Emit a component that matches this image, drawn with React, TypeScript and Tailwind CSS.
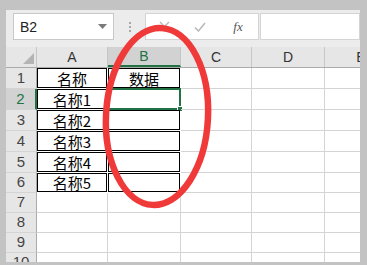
import React from 'react';

const cols = [
  { label: 'A', w: 71 },
  { label: 'B', w: 73 },
  { label: 'C', w: 71 },
  { label: 'D', w: 73 },
  { label: 'E', w: 73 },
];

const rowHeights = [21, 21, 21, 21, 21, 20, 20, 20, 20, 20];

const data: Record<number, string[]> = {
  1: ['名称', '数据'],
  2: ['名称1', ''],
  3: ['名称2', ''],
  4: ['名称3', ''],
  5: ['名称4', ''],
  6: ['名称5', ''],
};

const font = { fontFamily: '"Noto Sans CJK SC", "Liberation Sans", sans-serif' };

export default function App() {
  return (
    <div className="w-[367px] h-[265px] bg-[#c3c3c3] pt-[10px] pl-[6px] pr-[7px] pb-[3px]">
      <div className="relative w-full h-full bg-[#ececec] overflow-hidden flex flex-col" style={font}>
        {/* formula bar */}
        <div className="h-[37px] shrink-0 flex items-start pt-[3px] pl-[7px]">
          <div className="w-[101px] h-[27px] bg-white border border-[#c8c8c8] flex items-center justify-between pl-[6px] pr-[6px]">
            <span className="text-[14px] text-[#222] leading-none" style={{ fontFamily: '"Liberation Sans", sans-serif' }}>B2</span>
            <svg width="9" height="5" viewBox="0 0 9 5"><path d="M0 0h9L4.5 5z" fill="#7a7a7a" /></svg>
          </div>
          <div className="w-[31px] h-[27px] flex flex-col items-center justify-center gap-[2px]">
            <span className="w-[2px] h-[2px] bg-[#a8a8a8]" />
            <span className="w-[2px] h-[2px] bg-[#a8a8a8]" />
            <span className="w-[2px] h-[2px] bg-[#a8a8a8]" />
          </div>
          <div className="w-[114px] h-[27px] bg-white border border-[#d4d4d4] flex items-center">
            <div className="w-[36px] flex justify-center">
              <svg width="11" height="11" viewBox="0 0 11 11"><path d="M1 1l9 9M10 1l-9 9" stroke="#b8b8b8" strokeWidth="1.4" /></svg>
            </div>
            <div className="w-[36px] flex justify-center">
              <svg width="12" height="10" viewBox="0 0 12 10"><path d="M1 5.5l3.5 3.5L11 1" stroke="#b8b8b8" strokeWidth="1.5" fill="none" /></svg>
            </div>
            <div className="w-[40px] flex justify-center">
              <span className="text-[13px] italic text-[#555]" style={{ fontFamily: '"Liberation Serif", serif' }}>fx</span>
            </div>
          </div>
          <div className="flex-1 h-[27px] bg-white border border-[#d4d4d4] ml-[1px]" />
        </div>

        {/* grid */}
        <div className="flex-1 bg-white">
          <div className="flex h-[21px] bg-[#e6e6e6] border-b border-[#ababab]">
            <div className="w-[31px] shrink-0 relative border-r border-[#c6c6c6]">
              <svg className="absolute right-[2px] bottom-[3px]" width="11" height="11" viewBox="0 0 11 11"><path d="M11 0v11H0z" fill="#b4b4b4" /></svg>
            </div>
            {cols.map((c) => {
              const sel = c.label === 'B';
              return (
                <div
                  key={c.label}
                  style={{ width: c.w }}
                  className={`shrink-0 flex items-center justify-center text-[14px] leading-none border-r border-[#c6c6c6] ${
                    sel ? 'bg-[#d2d2d2] text-[#217346] border-b-2 border-b-[#217346]' : 'text-[#333]'
                  }`}
                >
                  <span style={{ fontFamily: '"Liberation Sans", sans-serif' }}>{c.label}</span>
                </div>
              );
            })}
          </div>

          {rowHeights.map((h, i) => {
            const r = i + 1;
            const row = data[r];
            const selRow = r === 2;
            return (
              <div key={r} className="flex" style={{ height: h }}>
                <div
                  className={`w-[31px] shrink-0 flex items-center justify-center text-[15px] border-b border-[#d4d4d4] ${
                    selRow ? 'bg-[#d2d2d2] text-[#217346] border-r-2 border-r-[#217346]' : 'bg-[#e6e6e6] text-[#444] border-r border-r-[#ababab]'
                  }`}
                  style={{ fontFamily: '"Liberation Sans", sans-serif' }}
                >
                  {r}
                </div>
                {cols.map((c, ci) => {
                  const boxed = row && ci < 2;
                  const isSel = r === 2 && ci === 1;
                  return (
                    <div
                      key={c.label}
                      style={{ width: c.w }}
                      className={`shrink-0 relative ${boxed ? '' : 'border-r border-b border-[#d4d4d4]'}`}
                    >
                      {boxed && (
                        <div className="absolute inset-0 mr-[1px] mb-[1px] border border-black flex items-center justify-center text-[15px] text-black leading-none">
                          {row[ci]}
                        </div>
                      )}
                      {isSel && (
                        <div className="absolute -left-[1px] -top-[1px] right-0 bottom-0 border-2 border-[#217346]">
                          <div className="absolute -right-[4px] -bottom-[4px] w-[6px] h-[6px] bg-[#217346] border border-white" />
                        </div>
                      )}
                    </div>
                  );
                })}
              </div>
            );
          })}
        </div>

        {/* red annotation ellipse */}
        <svg className="absolute left-0 top-0 pointer-events-none" width="354" height="252" viewBox="0 0 354 252">
          <ellipse cx="151" cy="106.5" rx="51" ry="88.5" fill="none" stroke="#f03a3a" strokeWidth="6.5" transform="rotate(3 151 106.5)" />
        </svg>
      </div>
    </div>
  );
}
